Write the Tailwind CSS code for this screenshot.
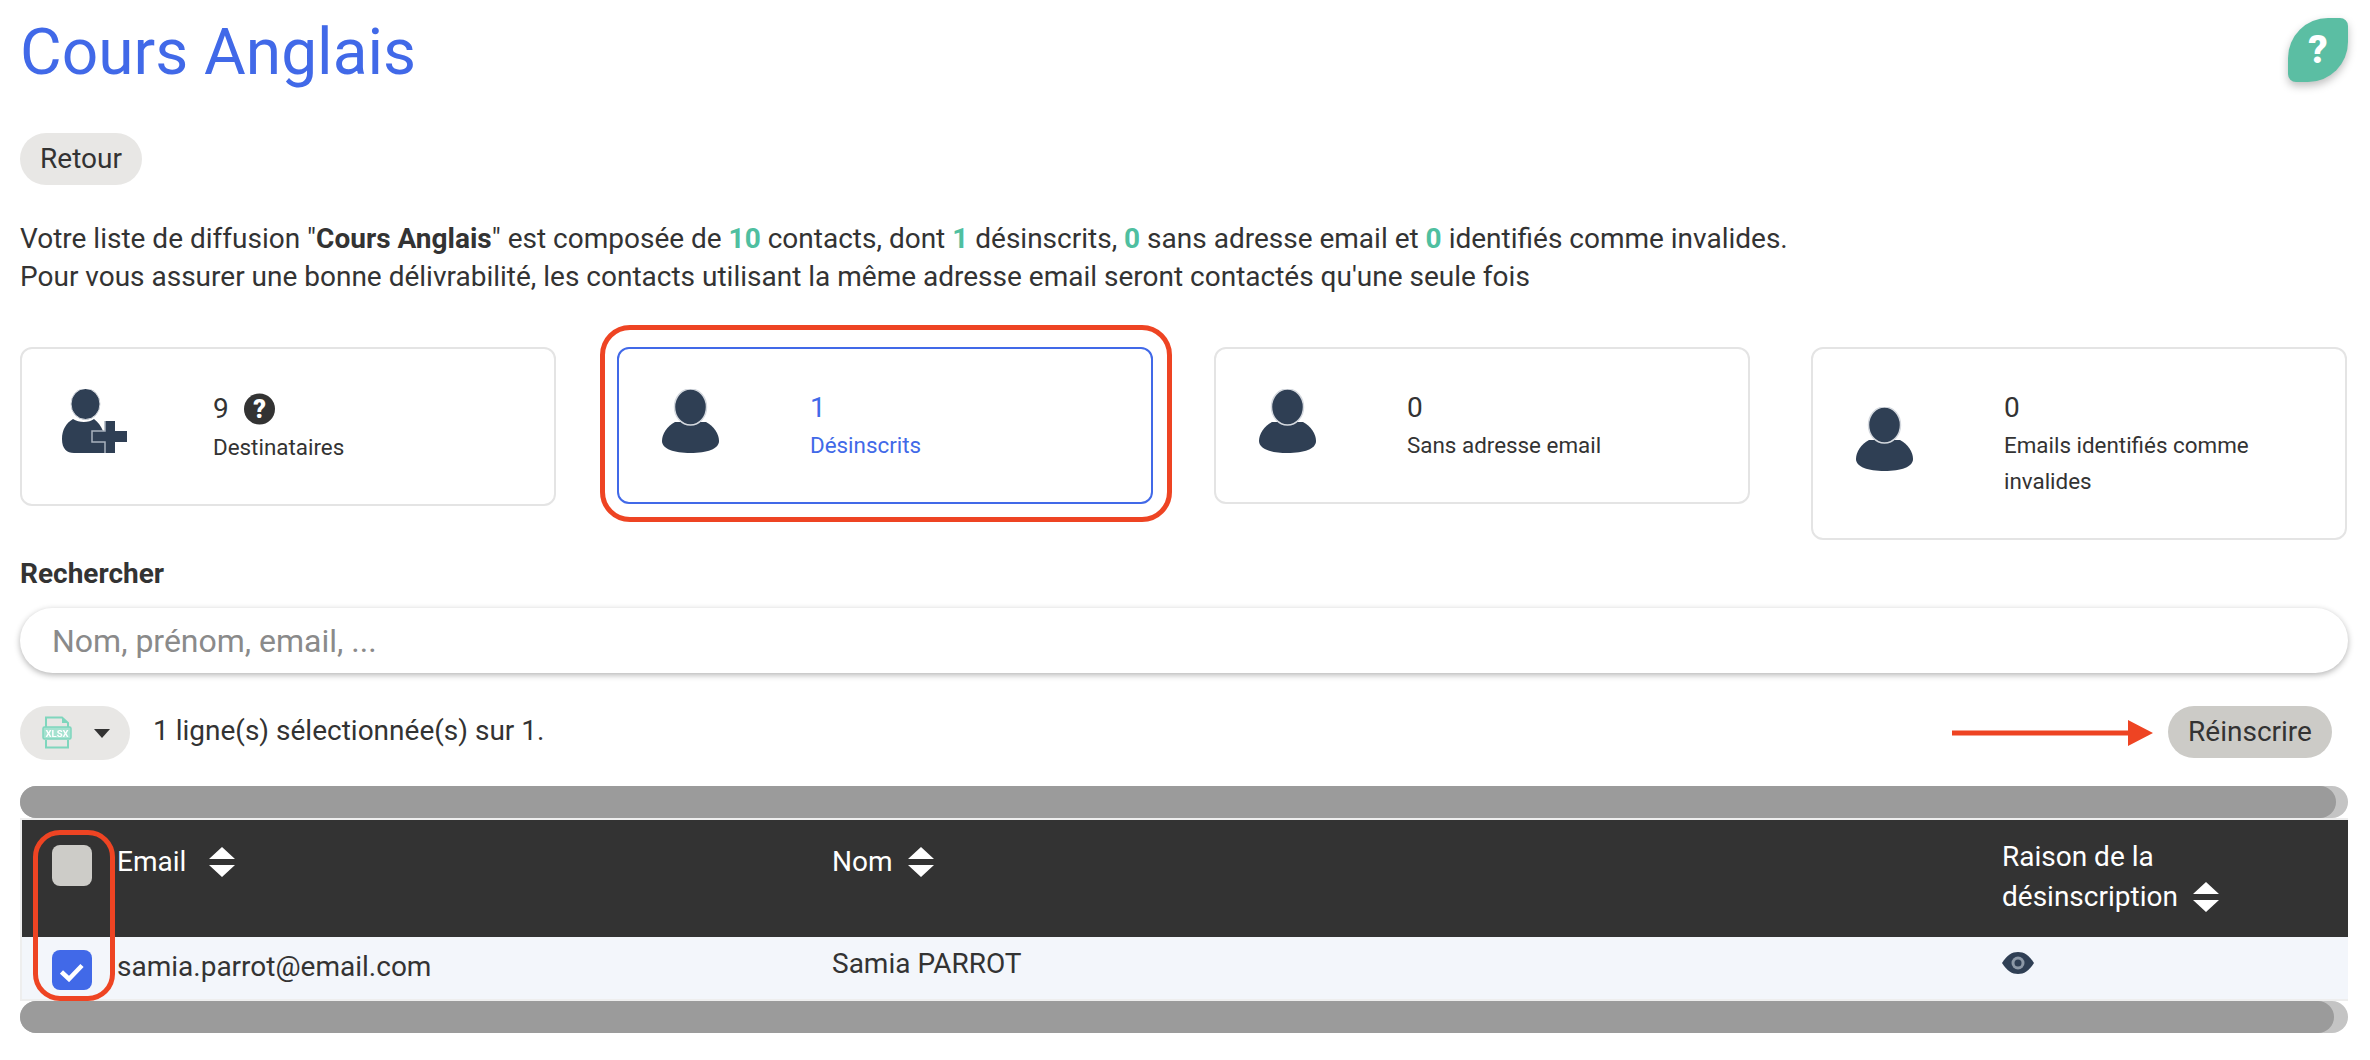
<!doctype html>
<html lang="fr">
<head>
<meta charset="UTF-8" />
<title>Cours Anglais</title>
<script src="https://cdn.jsdelivr.net/npm/@tailwindcss/browser@4"></script>
</head>
<body class="bg-white text-[#333333] [font-family:Roboto,sans-serif] overflow-hidden">
<div class="w-[2370px] h-[1060px] px-[20px] pr-[22px]">

  <!-- Title and help -->
  <div class="flex justify-between items-start h-[133px]">
    <h1 class="text-[64px] leading-[76px] pt-[15px] text-[#4169e8] font-normal">Cours Anglais</h1>
    <button class="mt-[18px] w-[60px] h-[64px] bg-[#5bbea3] rounded-tl-[40px] rounded-br-[40px] rounded-tr-[8px] rounded-bl-[8px] shadow-[0_4px_8px_rgba(0,0,0,0.25)] text-white text-[38px] leading-[64px] font-black text-center">?</button>
  </div>

  <button class="block w-[122px] h-[52px] rounded-full bg-[#e8e7e5] text-[28px] text-center">Retour</button>

  <!-- Intro -->
  <p class="mt-[35px] text-[28px] leading-[38px]">
    Votre liste de diffusion "<b class="font-bold">Cours Anglais</b>" est composée de <b class="font-bold text-[#4fbfa0]">10</b> contacts, dont <b class="font-bold text-[#4fbfa0]">1</b> désinscrits, <b class="font-bold text-[#4fbfa0]">0</b> sans adresse email et <b class="font-bold text-[#4fbfa0]">0</b> identifiés comme invalides.<br>
    Pour vous assurer une bonne délivrabilité, les contacts utilisant la même adresse email seront contactés qu'une seule fois
  </p>

  <!-- Stat cards -->
  <div class="mt-[51px] flex items-start gap-[61px]">
    <div class="w-[536px] h-[159px] flex items-center pl-[40px] border-2 border-[#e4e4e4] rounded-[12px]">
      <div class="w-[151px] mb-[9px]">
        <svg width="66" height="66" viewBox="0 0 66 66" class="block" fill="#2f3f54">
          <ellipse cx="23.500" cy="15" rx="14.500" ry="15.500" stroke="#d5d9df" stroke-width="1"/>
          <path d="M11 30C4 34 0 41 0 50C0 60 5 64 12 64H43V53H30V42H41C39 37 36 33 32 30C27 34 17 34 11 30Z"/>
          <path d="M43 32H53V42H65V53H53V64H43V53H30V42H43Z"/>
          <path d="M43 32V42H30V53H43V64" fill="none" stroke="#a9b2bd" stroke-width="1.500"/>
        </svg>
      </div>
      <div>
        <div class="flex items-center gap-[15px] h-[41px] text-[28px]">9
          <svg width="31" height="32" viewBox="0 0 31 32" class="block"><circle cx="15.500" cy="16" r="15.500" fill="#333333"/><text x="15.500" y="25" text-anchor="middle" fill="#ffffff" font-family="Roboto" font-weight="900" font-size="25">?</text></svg>
        </div>
        <div class="text-[22.400px] leading-[36px]">Destinataires</div>
      </div>
    </div>

    <div class="relative w-[536px] h-[157px] flex items-center pl-[43px] border-2 border-[#4169e8] rounded-[12px] text-[#4169e8]">
      <div class="w-[148px] mb-[9px]">
        <svg width="57" height="64" viewBox="0 0 57 64" class="block" fill="#2f3f54">
          <path d="M13 33C5 37 0 45 0 52C0 60 12 64 28.500 64C45 64 57 60 57 52C57 45 52 37 44 33Z"/>
          <ellipse cx="28.500" cy="18" rx="16" ry="18" stroke="#d5d9df" stroke-width="1.500"/>
        </svg>
      </div>
      <div>
        <div class="text-[28px] leading-[38px]">1</div>
        <div class="text-[22.400px] leading-[36px]">Désinscrits</div>
      </div>
      <div class="absolute -left-[19px] -top-[24px] w-[572px] h-[197px] border-[5px] border-[#ee4423] rounded-[30px]"></div>
    </div>

    <div class="w-[536px] h-[157px] flex items-center pl-[43px] border-2 border-[#e4e4e4] rounded-[12px]">
      <div class="w-[148px] mb-[9px]">
        <svg width="57" height="64" viewBox="0 0 57 64" class="block" fill="#2f3f54">
          <path d="M13 33C5 37 0 45 0 52C0 60 12 64 28.500 64C45 64 57 60 57 52C57 45 52 37 44 33Z"/>
          <ellipse cx="28.500" cy="18" rx="16" ry="18" stroke="#d5d9df" stroke-width="1.500"/>
        </svg>
      </div>
      <div>
        <div class="text-[28px] leading-[38px]">0</div>
        <div class="text-[22.400px] leading-[36px]">Sans adresse email</div>
      </div>
    </div>

    <div class="w-[536px] h-[193px] flex items-center pl-[43px] border-2 border-[#e4e4e4] rounded-[12px]">
      <div class="w-[148px] mb-[9px] shrink-0">
        <svg width="57" height="64" viewBox="0 0 57 64" class="block" fill="#2f3f54">
          <path d="M13 33C5 37 0 45 0 52C0 60 12 64 28.500 64C45 64 57 60 57 52C57 45 52 37 44 33Z"/>
          <ellipse cx="28.500" cy="18" rx="16" ry="18" stroke="#d5d9df" stroke-width="1.500"/>
        </svg>
      </div>
      <div>
        <div class="text-[28px] leading-[38px]">0</div>
        <div class="text-[22.400px] leading-[36px] w-[280px]">Emails identifiés comme invalides</div>
      </div>
    </div>
  </div>

  <!-- Search -->
  <label class="block mt-[16px] text-[28px] leading-[36px] font-bold">Rechercher</label>
  <input type="text" placeholder="Nom, prénom, email, ..." class="block mt-[16px] w-full h-[65px] px-[32px] rounded-full bg-white shadow-[0_2px_6px_rgba(0,0,0,0.3)] text-[32px] placeholder:text-[#8a8a8a] outline-none" />

  <!-- Toolbar -->
  <div class="mt-[33px] h-[54px] flex items-center">
    <button class="w-[110px] h-[54px] rounded-full bg-[#e8e7e5] flex items-center pl-[22px] gap-[22px]">
      <svg width="30" height="33" viewBox="0 0 30 33" class="block -mt-[2px] blur-[0.4px]">
        <path d="M4 11V1.500H20L26 7V11M4 24V31.500H26V24" fill="none" stroke="#7fd6bd" stroke-width="2"/>
        <path d="M20 1.500V7H26Z" fill="#7fd6bd"/>
        <rect x="1" y="11" width="28" height="12" rx="1.500" fill="#a5e2d0" stroke="#7fd6bd" stroke-width="1.500"/>
        <text x="15" y="21" text-anchor="middle" fill="#ffffff" font-family="Roboto" font-weight="700" font-size="9.500">XLSX</text>
      </svg>
      <svg width="16" height="9" viewBox="0 0 16 9" class="block"><path d="M0 0H16L8 9Z" fill="#333333"/></svg>
    </button>
    <span class="ml-[23px] mb-[5px] text-[28px]">1 ligne(s) sélectionnée(s) sur 1.</span>
    <svg width="201" height="26" viewBox="0 0 201 26" class="block ml-auto"><path d="M0 10.500H176V0L201 13L176 26V15.500H0Z" fill="#ee4423"/></svg>
    <button class="ml-[15px] mr-[16px] mb-[2px] w-[164px] h-[52px] rounded-full bg-[#cccbc7] text-[28px] text-center">Réinscrire</button>
  </div>

  <!-- Top scrollbar -->
  <div class="mt-[26px] h-[32px] rounded-full bg-[#c4c4c4]"><div class="w-[2316px] h-full rounded-full bg-[#9b9b9b]"></div></div>

  <!-- Table -->
  <div class="relative border-2 border-[#eeeeee] border-r-0">
    <table class="w-full table-fixed border-collapse text-[28px]">
      <thead>
        <tr class="bg-[#333333] text-white h-[117px] align-top">
          <th class="w-[95px] pl-[30px] pt-[25px] font-normal text-left"><span class="block w-[40px] h-[41px] rounded-[8px] bg-[#cdccc8]"></span></th>
          <th class="w-[715px] pt-[26px] font-normal text-left leading-[32px]">
            <span class="flex items-center gap-[23px]">Email
              <svg width="26" height="30" viewBox="0 0 26 30" class="block"><path d="M13 0L26 12H0ZM0 18H26L13 30Z" fill="#ffffff"/></svg>
            </span>
          </th>
          <th class="w-[1170px] pt-[26px] font-normal text-left leading-[32px]">
            <span class="flex items-center gap-[15px]">Nom
              <svg width="26" height="30" viewBox="0 0 26 30" class="block"><path d="M13 0L26 12H0ZM0 18H26L13 30Z" fill="#ffffff"/></svg>
            </span>
          </th>
          <th class="pt-[17px] font-normal text-left leading-[40px]">Raison de la<br>
            <span class="inline-flex items-center gap-[15px]">désinscription
              <svg width="26" height="30" viewBox="0 0 26 30" class="block"><path d="M13 0L26 12H0ZM0 18H26L13 30Z" fill="#ffffff"/></svg>
            </span>
          </th>
        </tr>
      </thead>
      <tbody>
        <tr class="bg-[#f3f6fb] h-[62px] align-top">
          <td class="pl-[30px] pt-[13px]">
            <span class="w-[40px] h-[40px] rounded-[8px] bg-[#4169e8] flex items-center justify-center">
              <svg width="24" height="20" viewBox="0 0 24 20" class="block mt-[3px]"><path d="M1.500 10L9 17L22 3.500" fill="none" stroke="#ffffff" stroke-width="4.500"/></svg>
            </span>
          </td>
          <td class="pt-[10px] leading-[40px]">samia.parrot@email.com</td>
          <td class="pt-[7px] leading-[40px]">Samia PARROT</td>
          <td class="pt-[15px]">
            <svg width="32" height="22" viewBox="0 0 32 22" class="block"><path d="M0 11C5 3 10 0 16 0C22 0 27 3 32 11C27 19 22 22 16 22C10 22 5 19 0 11Z" fill="#2f3f54"/><circle cx="16" cy="11" r="6.500" fill="#8c98a6"/><circle cx="16" cy="11" r="3.500" fill="#2f3f54"/></svg>
          </td>
        </tr>
      </tbody>
    </table>
    <div class="absolute left-[11px] top-[10px] w-[82px] h-[171px] border-[5px] border-[#ee4423] rounded-[27px]"></div>
  </div>

  <!-- Bottom scrollbar -->
  <div class="h-[32px] rounded-full bg-[#c4c4c4]"><div class="w-[2314px] h-full rounded-full bg-[#9b9b9b]"></div></div>
</div>
</body>
</html>
